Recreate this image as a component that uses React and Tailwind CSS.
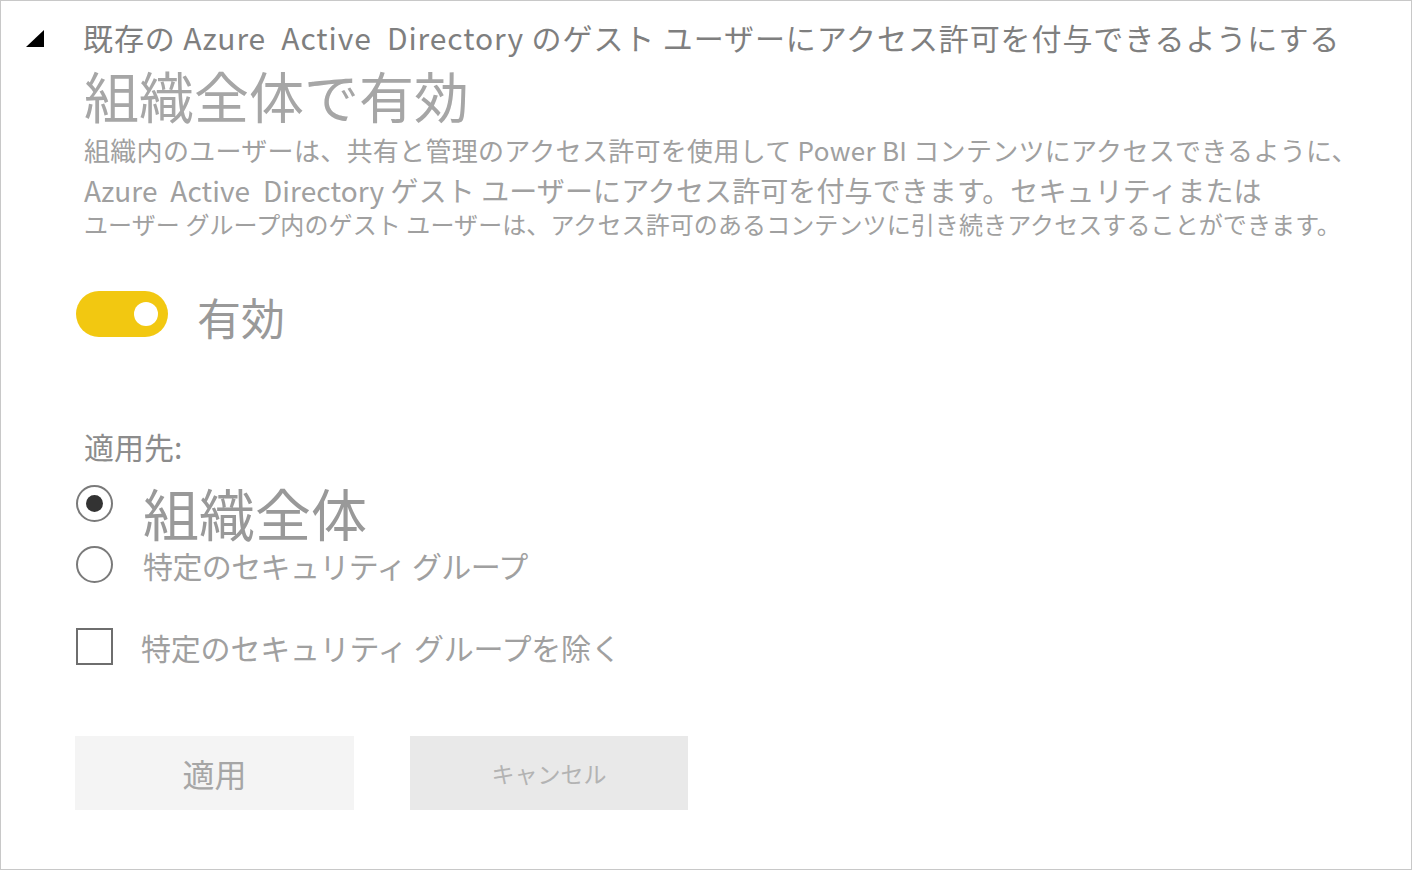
export default function App() {
  return (
    <div
      className="w-[1413px] h-[871px] bg-white"
      style={{ fontFamily: '"Noto Sans CJK JP", "Noto Sans", sans-serif' }}
    >
      <div className="w-[1412px] h-[870px] border border-[#c8c8c8] relative overflow-hidden">
        {/* header */}
        <div className="flex items-center h-[34px] mt-[19px] pl-[24px]">
          <svg width="20" height="18" viewBox="0 0 20 18" className="shrink-0 mt-[4px]">
            <polygon points="1,17 19,17 19,0" fill="#000" />
          </svg>
          <span className="ml-[38px] text-[30px] leading-[34px] text-[#7f7f7f] whitespace-nowrap tracking-[0.9px]">
            既存の Azure&nbsp; Active&nbsp; Directory のゲスト ユーザーにアクセス許可を付与できるようにする
          </span>
        </div>

        <div className="pl-[83px]">
          <h1 className="mt-[12px] text-[55px] leading-[56px] text-[#a6a6a6] font-normal whitespace-nowrap">
            組織全体で有効
          </h1>

          <p className="mt-[14px] text-[26px] leading-[28px] text-[#a0a0a0] whitespace-nowrap tracking-[0.3px]">
            組織内のユーザーは、共有と管理のアクセス許可を使用して Power BI コンテンツにアクセスできるように、
          </p>
          <p className="mt-[12px] text-[28px] leading-[28px] text-[#a0a0a0] whitespace-nowrap tracking-[0.1px]">
            Azure&nbsp; Active&nbsp; Directory ゲスト ユーザーにアクセス許可を付与できます。セキュリティまたは
          </p>
          <p className="mt-[8px] text-[24px] leading-[24px] text-[#a0a0a0] whitespace-nowrap tracking-[0.1px]">
            ユーザー グループ内のゲスト ユーザーは、アクセス許可のあるコンテンツに引き続きアクセスすることができます。
          </p>
        </div>

        {/* toggle */}
        <div className="mt-[55px] pl-[75px] flex items-center h-[46px]">
          <div className="w-[92px] h-[46px] rounded-full bg-[#f2c811] flex items-center justify-end pr-[10px]">
            <div className="w-[24px] h-[24px] rounded-full bg-white" />
          </div>
          <span className="ml-[29px] text-[44px] leading-[46px] text-[#999999] mt-[6px]">有効</span>
        </div>

        <div className="pl-[75px]">
          <div className="mt-[93px] pl-[8px] text-[30px] leading-[32px] text-[#8c8c8c]">適用先:</div>

          {/* radio 1 */}
          <div className="mt-[22px] flex items-start">
            <div className="mt-[1px] w-[37px] h-[37px] rounded-full border-2 border-[#7a7a7a] flex items-center justify-center shrink-0">
              <div className="w-[17px] h-[17px] rounded-full bg-[#333333]" />
            </div>
            <span className="ml-[30px] text-[56px] leading-[56px] text-[#999999] whitespace-nowrap">組織全体</span>
          </div>

          {/* radio 2 */}
          <div className="mt-[6px] flex items-center h-[37px]">
            <div className="w-[37px] h-[37px] rounded-full border-2 border-[#7a7a7a] shrink-0" />
            <span className="ml-[30px] text-[30px] leading-[34px] text-[#a0a0a0] whitespace-nowrap tracking-[-0.6px]">
              特定のセキュリティ グループ
            </span>
          </div>

          {/* checkbox */}
          <div className="mt-[45px] flex items-center h-[37px]">
            <div className="w-[37px] h-[37px] border-2 border-[#6e6e6e] shrink-0" />
            <span className="ml-[28px] text-[30px] leading-[34px] text-[#a0a0a0] whitespace-nowrap tracking-[-0.2px]">
              特定のセキュリティ グループを除く
            </span>
          </div>

          {/* buttons */}
          <div className="mt-[71px] -ml-[1px] flex gap-[56px]">
            <button className="w-[279px] h-[74px] bg-[#f4f4f4] text-[32px] text-[#a6a6a6] flex items-center justify-center">
              適用
            </button>
            <button className="w-[278px] h-[74px] bg-[#e9e9e9] text-[23px] text-[#b3b3b3] flex items-center justify-center">
              キャンセル
            </button>
          </div>
        </div>
      </div>
    </div>
  );
}
